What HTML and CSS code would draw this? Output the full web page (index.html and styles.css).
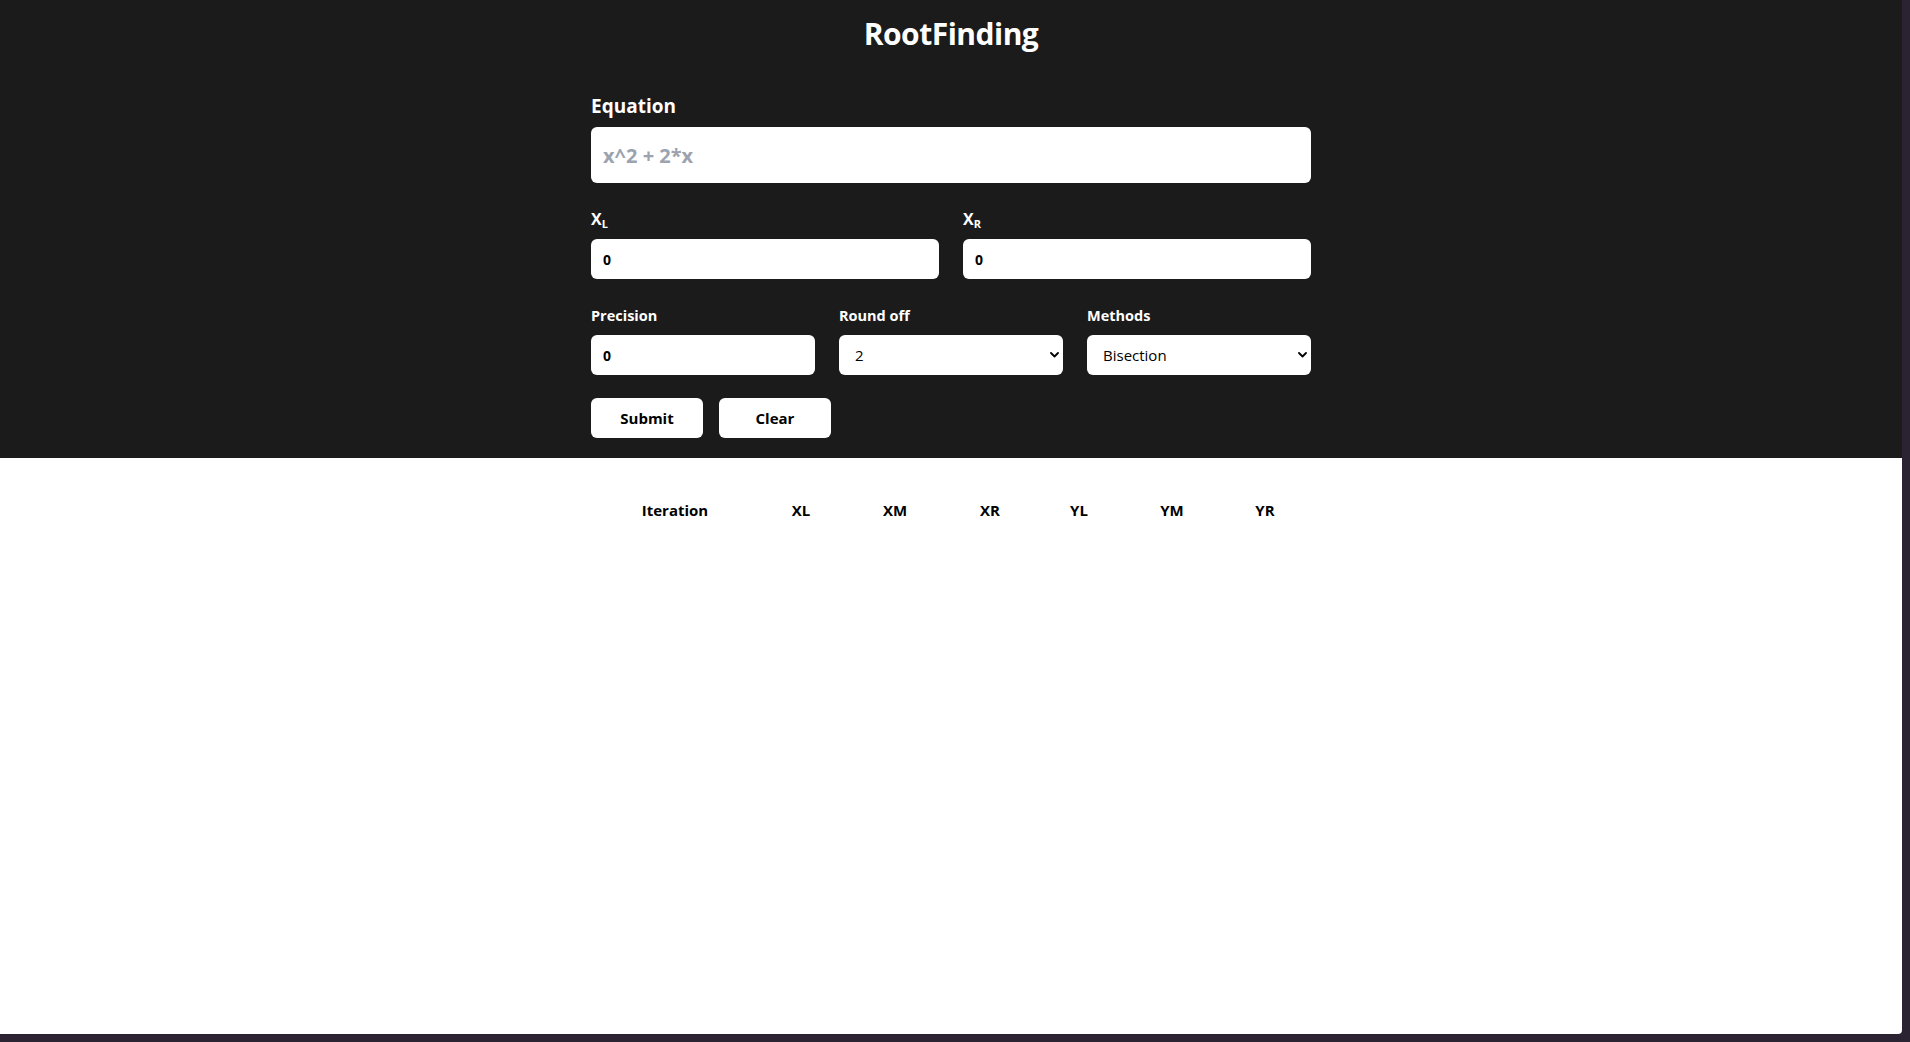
FILE: index.html
```html
<!DOCTYPE html>
<html lang="en">
<head>
<meta charset="utf-8">
<title>RootFinding</title>
<link rel="stylesheet" href="styles.css">
</head>
<body>
<div class="page">
  <header class="header">
    <h1 class="title">RootFinding</h1>
    <form class="form">
      <div class="field">
        <label class="label label-lg" for="eq">Equation</label>
        <input class="input input-lg" id="eq" type="text" placeholder="x^2 + 2*x">
      </div>
      <div class="row row-2">
        <div class="field">
          <label class="label label-md" for="xl">X<sub>L</sub></label>
          <input class="input" id="xl" type="text" value="0">
        </div>
        <div class="field">
          <label class="label label-md" for="xr">X<sub>R</sub></label>
          <input class="input" id="xr" type="text" value="0">
        </div>
      </div>
      <div class="row row-3">
        <div class="field">
          <label class="label label-sm" for="prec">Precision</label>
          <input class="input" id="prec" type="text" value="0">
        </div>
        <div class="field">
          <label class="label label-sm" for="round">Round off</label>
          <div class="select-wrap">
            <select class="select" id="round">
              <option>2</option>
              <option>3</option>
              <option>4</option>
            </select>
            <svg class="chev" width="9" height="6" viewBox="0 0 9 6"><polyline points="1,1 4.5,4.5 8,1" fill="none" stroke="#000" stroke-width="1.8" stroke-linecap="round" stroke-linejoin="round"/></svg>
          </div>
        </div>
        <div class="field">
          <label class="label label-sm" for="method">Methods</label>
          <div class="select-wrap">
            <select class="select" id="method">
              <option>Bisection</option>
              <option>False Position</option>
            </select>
            <svg class="chev" width="9" height="6" viewBox="0 0 9 6"><polyline points="1,1 4.5,4.5 8,1" fill="none" stroke="#000" stroke-width="1.8" stroke-linecap="round" stroke-linejoin="round"/></svg>
          </div>
        </div>
      </div>
      <div class="buttons">
        <button class="btn" type="button">Submit</button>
        <button class="btn" type="button">Clear</button>
      </div>
    </form>
  </header>
  <main class="results">
    <table class="table">
      <thead>
        <tr>
          <th class="c-iter">Iteration</th>
          <th class="c-xl">XL</th>
          <th class="c-xm">XM</th>
          <th class="c-xr">XR</th>
          <th class="c-yl">YL</th>
          <th class="c-ym">YM</th>
          <th class="c-yr">YR</th>
        </tr>
      </thead>
      <tbody></tbody>
    </table>
  </main>
</div>
</body>
</html>
```

FILE: styles.css
```css
* { box-sizing: border-box; }

html, body {
  margin: 0;
  padding: 0;
}

body {
  background: #2b2331;
  font-family: "Open Sans", "Noto Sans", sans-serif;
  width: 1910px;
  height: 1042px;
  overflow: hidden;
}

.page {
  width: 1902px;
  height: 1034px;
  background: #ffffff;
  border-bottom-right-radius: 4px;
  overflow: hidden;
}

.header {
  background: #1b1b1b;
  padding: 12px 0 20px;
}

.title {
  margin: 0;
  color: #ffffff;
  font-size: 30px;
  line-height: 44px;
  font-weight: 700;
  text-align: center;
  letter-spacing: -0.5px;
}

.form {
  width: 720px;
  margin: 36px auto 0;
  display: flex;
  flex-direction: column;
}

.field {
  display: flex;
  flex-direction: column;
  min-width: 0;
}

.label {
  color: #ffffff;
  font-weight: 700;
}

.label-lg {
  font-size: 19px;
  line-height: 28px;
  margin-bottom: 7px;
}

.label-md {
  font-size: 16px;
  line-height: 24px;
  margin-bottom: 8px;
}

.label-md sub {
  font-size: 11px;
  line-height: 0;
  vertical-align: -3px;
}

.label-sm {
  font-size: 14.5px;
  line-height: 22px;
  margin-bottom: 8px;
}

.input {
  height: 40px;
  border: none;
  border-radius: 6px;
  background: #ffffff;
  padding: 0 12px;
  font-family: inherit;
  font-size: 14px;
  font-weight: 700;
  color: #000000;
  outline: none;
  width: 100%;
}

.input-lg {
  height: 56px;
  font-size: 20px;
}

.input::placeholder {
  color: #9ca3af;
  font-weight: 700;
}

.row {
  display: grid;
  gap: 24px;
}

.row-2 {
  grid-template-columns: 1fr 1fr;
  margin-top: 24px;
}

.row-3 {
  grid-template-columns: 1fr 1fr 1fr;
  margin-top: 26px;
}

.select-wrap {
  position: relative;
}

.select {
  appearance: none;
  -webkit-appearance: none;
  width: 100%;
  height: 40px;
  border: none;
  border-radius: 6px;
  background: #ffffff;
  padding: 0 16px;
  font-family: inherit;
  font-size: 15px;
  font-weight: 400;
  color: #000000;
  outline: none;
}

.chev {
  position: absolute;
  right: 4px;
  top: 17px;
  pointer-events: none;
}

.buttons {
  display: flex;
  gap: 16px;
  margin-top: 23px;
}

.btn {
  width: 112px;
  height: 40px;
  border: none;
  border-radius: 6px;
  background: #ffffff;
  color: #000000;
  font-family: inherit;
  font-size: 15px;
  font-weight: 700;
  cursor: pointer;
}

.results {
  padding-top: 28px;
}

.table {
  width: 720px;
  margin: 0 auto;
  border-collapse: collapse;
  table-layout: fixed;
}

.table th {
  padding: 12px 0;
  font-size: 15px;
  line-height: 24px;
  font-weight: 700;
  color: #000000;
  text-align: center;
}

.c-iter { width: 168px; }
.c-xl { width: 84px; }
.c-xm { width: 104px; }
.c-xr { width: 86px; }
.c-yl { width: 92px; }
.c-ym { width: 94px; }
.c-yr { width: 92px; }
```
